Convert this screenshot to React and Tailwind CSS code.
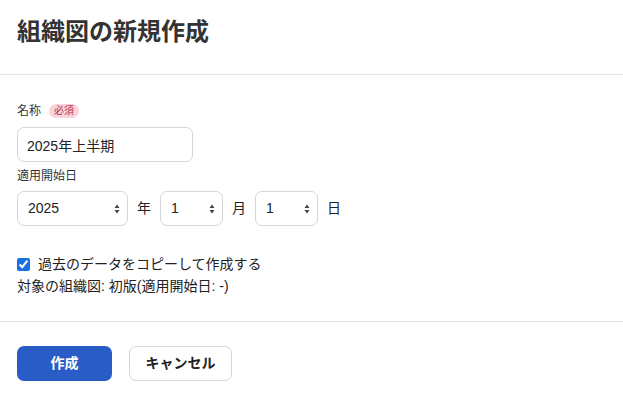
import { useState } from "react";

const font = { fontFamily: '"Liberation Sans", "Noto Sans CJK JP", sans-serif' };

const Arrows = () => (
    <svg className="pointer-events-none absolute right-[8px] top-1/2 -translate-y-1/2" width="6" height="10" viewBox="0 0 6 10">
        <path d="M3 0.5 L5.5 4 L0.5 4 Z" fill="#444" />
        <path d="M3 9.5 L5.5 6 L0.5 6 Z" fill="#444" />
    </svg>
);

const Select = ({ value, options, onChange, width }) => (
    <div className={`relative ${width}`}>
        <select
            value={value}
            onChange={(e) => onChange(e.target.value)}
            className="w-full h-[35px] appearance-none rounded-[7px] border border-[#d6d6d6] bg-white pl-[10px] pr-6 text-[14px] text-[#222] outline-none"
            style={font}
        >
            {options.map((o) => (
                <option key={o} value={o}>{o}</option>
            ))}
        </select>
        <Arrows />
    </div>
);

const App = () => {
    const [name, setName] = useState("2025年上半期");
    const [year, setYear] = useState("2025");
    const [month, setMonth] = useState("1");
    const [day, setDay] = useState("1");
    const [copy, setCopy] = useState(true);

    const years = ["2024", "2025", "2026"];
    const months = Array.from({ length: 12 }, (_, i) => String(i + 1));
    const days = Array.from({ length: 31 }, (_, i) => String(i + 1));

    return (
        <div className="w-[623px] h-[393px] bg-white text-[#333] overflow-hidden" style={font}>
            {/* header */}
            <div className="h-[75px] border-b border-[#e5e5e5] px-[17px] pt-[16px]">
                <h1 className="text-[24px] leading-[32px] font-bold text-[#333]">組織図の新規作成</h1>
            </div>

            {/* body */}
            <div className="px-[17px] pt-[28px] pb-[25px] border-b border-[#e5e5e5]">
                <div className="flex items-center gap-[8px] h-[16px]">
                    <span className="text-[12px] leading-[16px]">名称</span>
                    <span className="rounded-full bg-[#f9d4dc] px-[5px] text-[10px] leading-[14px] text-[#b8324f]">必須</span>
                </div>
                <input
                    value={name}
                    onChange={(e) => setName(e.target.value)}
                    className="mt-[8px] block w-[176px] h-[35px] rounded-[7px] border border-[#d6d6d6] px-[9px] text-[14px] text-[#222] outline-none"
                    style={font}
                />

                <div className="mt-[6px] text-[12px] leading-[16px]">適用開始日</div>
                <div className="mt-[7px] flex items-center gap-[9px] text-[14px] text-[#222]">
                    <Select value={year} options={years} onChange={setYear} width="w-[111px]" />
                    <span>年</span>
                    <Select value={month} options={months} onChange={setMonth} width="w-[63px]" />
                    <span>月</span>
                    <Select value={day} options={days} onChange={setDay} width="w-[63px]" />
                    <span>日</span>
                </div>

                <label className="mt-[28px] flex items-center gap-[8px] text-[14px] leading-[20px] text-[#222]">
                    <input
                        type="checkbox"
                        checked={copy}
                        onChange={(e) => setCopy(e.target.checked)}
                        className="m-0 w-[13px] h-[13px] accent-[#1a6fe3]"
                    />
                    過去のデータをコピーして作成する
                </label>
                <div className="mt-[2px] text-[14px] leading-[20px] text-[#222]">対象の組織図: 初版(適用開始日: -)</div>
            </div>

            {/* footer */}
            <div className="px-[17px] pt-[24px] flex gap-[17px]">
                <button className="w-[95px] h-[35px] rounded-[7px] bg-[#2a5cc8] text-white text-[14px] font-bold">作成</button>
                <button className="w-[103px] h-[35px] rounded-[7px] border border-[#d6d6d6] bg-white text-[#222] text-[14px] font-bold">キャンセル</button>
            </div>
        </div>
    );
};

export default App;
